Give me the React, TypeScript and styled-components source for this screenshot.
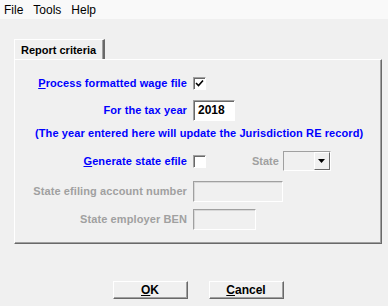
import React from 'react';
import styled, { createGlobalStyle } from 'styled-components';

const GlobalStyle = createGlobalStyle`
  html, body {
    margin: 0;
    padding: 0;
    background: #f0f0f0;
  }
  body {
    width: 388px;
    height: 306px;
    overflow: hidden;
    font-family: 'Liberation Sans', Arial, sans-serif;
  }
`;

const Window = styled.div`
  width: 388px;
  height: 306px;
  display: flex;
  flex-direction: column;
  background: #f0f0f0;
`;

const MenuBar = styled.div`
  height: 19px;
  background: #f9f9f9;
  display: flex;
  align-items: center;
  padding-left: 4px;
  gap: 10px;
  font-size: 12px;
  color: #000;
`;

const Body = styled.div`
  padding: 20px 6px 0 14px;
  display: flex;
  flex-direction: column;
`;

const TabStrip = styled.div`
  display: flex;
  height: 20px;
`;

const Tab = styled.div`
  height: 20px;
  box-sizing: border-box;
  padding: 0 7px 0 6px;
  display: flex;
  align-items: center;
  border-top: 1px solid #fff;
  border-left: 1px solid #fff;
  border-right: 2px solid #696969;
  box-shadow: inset -1px 0 0 #a0a0a0;
  font-weight: bold;
  font-size: 11px;
  color: #000;
  margin-bottom: -1px;
  position: relative;
  z-index: 1;
  background: #f0f0f0;
`;

const Panel = styled.div`
  width: 368px;
  height: 185px;
  box-sizing: border-box;
  border-top: 1px solid #fff;
  border-left: 1px solid #fff;
  border-right: 1px solid #696969;
  border-bottom: 1px solid #696969;
  box-shadow: inset -1px -1px 0 #a0a0a0;
  padding-top: 13px;
  display: flex;
  flex-direction: column;
`;

const FormLine = styled.div<{ $gap: number }>`
  display: flex;
  align-items: center;
  height: 20px;
  margin-top: ${({ $gap }) => $gap}px;
`;

const LabelCell = styled.div`
  width: 172px;
  flex: none;
  display: flex;
  justify-content: flex-end;
  margin-right: 6px;
`;

const Label = styled.label<{ $disabled?: boolean }>`
  font-weight: bold;
  font-size: 11px;
  letter-spacing: 0.1px;
  color: ${({ $disabled }) => ($disabled ? '#a0a0a0' : '#0000ff')};
  white-space: nowrap;
`;

const Note = styled.div`
  padding-left: 20px;
  font-weight: bold;
  font-size: 11px;
  letter-spacing: 0.1px;
  color: #0000ff;
  white-space: nowrap;
`;

const Controls = styled.div`
  display: flex;
  align-items: center;
`;

const Check = styled.div`
  width: 13px;
  height: 13px;
  box-sizing: border-box;
  background: #fff;
  border-top: 1px solid #a0a0a0;
  border-left: 1px solid #a0a0a0;
  border-right: 1px solid #fff;
  border-bottom: 1px solid #fff;
  box-shadow: inset 1px 1px 0 #696969;
  display: flex;
  align-items: center;
  justify-content: center;
`;

const Field = styled.div<{ $width: number; $disabled?: boolean }>`
  width: ${({ $width }) => $width}px;
  height: 21px;
  box-sizing: border-box;
  background: ${({ $disabled }) => ($disabled ? '#f0f0f0' : '#fff')};
  border-top: 1px solid #a0a0a0;
  border-left: 1px solid #a0a0a0;
  border-right: 1px solid #fff;
  border-bottom: 1px solid #fff;
  box-shadow: inset 1px 1px 0 ${({ $disabled }) => ($disabled ? '#d8d8d8' : '#696969')};
  padding: 2px 0 0 4px;
  font-weight: bold;
  font-size: 12px;
  color: #000;
`;

const StateLabel = styled.span`
  margin-left: 46px;
  margin-right: 4px;
  font-weight: bold;
  font-size: 11px;
  color: #a0a0a0;
`;

const Select = styled.div`
  width: 48px;
  height: 20px;
  box-sizing: border-box;
  background: #f0f0f0;
  border-top: 1px solid #a0a0a0;
  border-left: 1px solid #a0a0a0;
  border-right: 1px solid #fff;
  border-bottom: 1px solid #fff;
  display: flex;
  justify-content: flex-end;
`;

const SelectButton = styled.div`
  width: 16px;
  height: 18px;
  box-sizing: border-box;
  border-top: 1px solid #fff;
  border-left: 1px solid #fff;
  border-right: 1px solid #696969;
  border-bottom: 1px solid #696969;
  display: flex;
  align-items: center;
  justify-content: center;
`;

const Footer = styled.div`
  display: flex;
  justify-content: center;
  gap: 21px;
  padding: 37px 0 0 0;
`;

const Button = styled.button`
  width: 75px;
  height: 18px;
  box-sizing: border-box;
  background: #f0f0f0;
  border-top: 1px solid #fff;
  border-left: 1px solid #fff;
  border-right: 1px solid #696969;
  border-bottom: 1px solid #696969;
  box-shadow: inset -1px -1px 0 #a0a0a0;
  padding: 0;
  font-family: 'Liberation Sans', Arial, sans-serif;
  font-weight: bold;
  font-size: 12px;
  color: #000;
`;

const App: React.FC = () => {
  return (
    <Window>
      <GlobalStyle />
      <MenuBar>
        <span>File</span>
        <span>Tools</span>
        <span>Help</span>
      </MenuBar>
      <Body>
        <TabStrip>
          <Tab>Report criteria</Tab>
        </TabStrip>
        <Panel>
          <FormLine $gap={0}>
            <LabelCell>
              <Label>
                <u>P</u>rocess formatted wage file
              </Label>
            </LabelCell>
            <Controls>
              <Check>
                <svg width="9" height="9" viewBox="0 0 9 9">
                  <path d="M1 4 L3.5 6.5 L8 1.5" stroke="#000" strokeWidth="1.6" fill="none" />
                </svg>
              </Check>
            </Controls>
          </FormLine>
          <FormLine $gap={7}>
            <LabelCell>
              <Label>For the tax year</Label>
            </LabelCell>
            <Controls>
              <Field $width={42}>2018</Field>
            </Controls>
          </FormLine>
          <FormLine $gap={3}>
            <Note>(The year entered here will update the Jurisdiction RE record)</Note>
          </FormLine>
          <FormLine $gap={8}>
            <LabelCell>
              <Label>
                <u>G</u>enerate state efile
              </Label>
            </LabelCell>
            <Controls>
              <Check />
              <StateLabel>State</StateLabel>
              <Select>
                <SelectButton>
                  <svg width="7" height="4" viewBox="0 0 7 4">
                    <path d="M0 0 H7 L3.5 4 Z" fill="#000" />
                  </svg>
                </SelectButton>
              </Select>
            </Controls>
          </FormLine>
          <FormLine $gap={10}>
            <LabelCell>
              <Label $disabled>State efiling account number</Label>
            </LabelCell>
            <Controls>
              <Field $width={90} $disabled />
            </Controls>
          </FormLine>
          <FormLine $gap={8}>
            <LabelCell>
              <Label $disabled>State employer BEN</Label>
            </LabelCell>
            <Controls>
              <Field $width={63} $disabled />
            </Controls>
          </FormLine>
        </Panel>
        <Footer>
          <Button>
            <u>O</u>K
          </Button>
          <Button>
            <u>C</u>ancel
          </Button>
        </Footer>
      </Body>
    </Window>
  );
};

export default App;
